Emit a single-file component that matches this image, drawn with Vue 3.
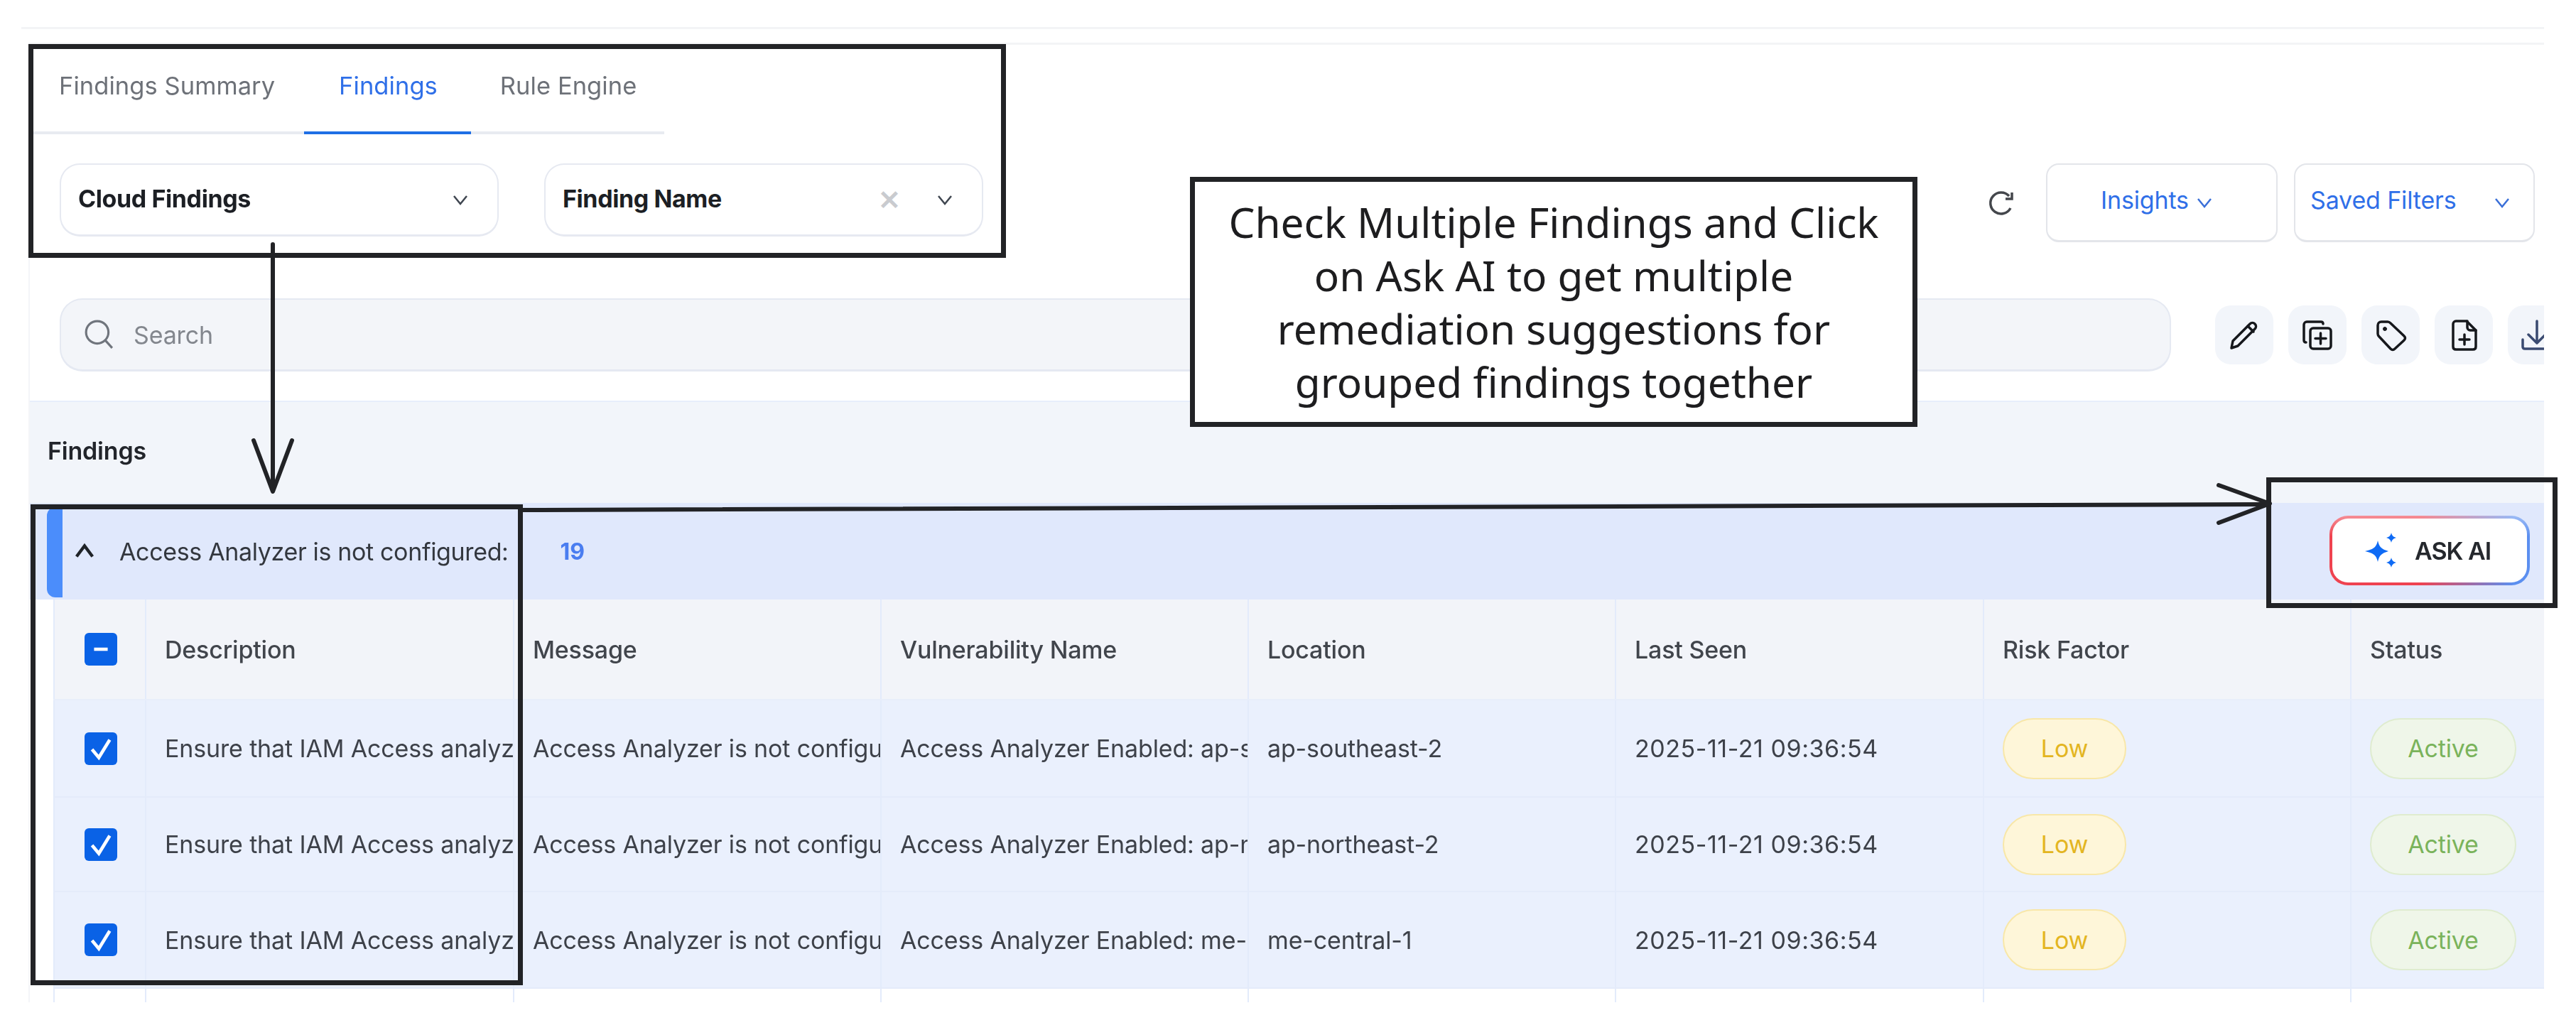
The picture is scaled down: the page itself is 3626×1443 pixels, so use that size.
<script setup>
const tabs = [
  { label: 'Findings Summary', active: false },
  { label: 'Findings', active: true },
  { label: 'Rule Engine', active: false },
]
const columns = ['Description', 'Message', 'Vulnerability Name', 'Location', 'Last Seen', 'Risk Factor', 'Status']
const rows = [
  { vuln: 'Access Analyzer Enabled: ap-southeast-2', location: 'ap-southeast-2', h: 137 },
  { vuln: 'Access Analyzer Enabled: ap-northeast-2', location: 'ap-northeast-2', h: 133 },
  { vuln: 'Access Analyzer Enabled: me-central-1', location: 'me-central-1', h: 136 },
]
const lines = [
  'Check Multiple Findings and Click',
  'on Ask AI to get multiple',
  'remediation suggestions for',
  'grouped findings together',
]
</script>

<template>
  <div class="page">
    <div class="top-line"></div>
    <main class="content">
      <nav class="tabs">
        <div v-for="t in tabs" :key="t.label" class="tab" :class="{ active: t.active }">{{ t.label }}</div>
      </nav>

      <section class="toolbar">
        <div class="selects">
          <div class="select">
            <span class="select-label">Cloud Findings</span>
            <svg class="chev" viewBox="0 0 24 24"><path d="M3 7l9 11 9-11" /></svg>
          </div>
          <div class="select">
            <span class="select-label">Finding Name</span>
            <span class="select-clear">✕</span>
            <svg class="chev" viewBox="0 0 24 24"><path d="M3 7l9 11 9-11" /></svg>
          </div>
        </div>
        <div class="actions">
          <svg class="refresh" viewBox="0 0 36 36"><path d="M31 25A15 15 0 1 1 29 8" /><path d="M33 3v9h-9" /></svg>
          <button class="btn insights"><span>Insights</span>
            <svg class="chev blue" viewBox="0 0 24 24"><path d="M3 7l9 11 9-11" /></svg>
          </button>
          <button class="btn saved"><span>Saved Filters</span>
            <svg class="chev blue" viewBox="0 0 24 24"><path d="M3 7l9 11 9-11" /></svg>
          </button>
        </div>
      </section>

      <section class="search-row">
        <div class="search">
          <svg class="search-icon" viewBox="0 0 40 40"><circle cx="18" cy="17" r="15" /><path d="M29 28l9 10" /></svg>
          <span>Search</span>
        </div>
        <div class="icon-btns">
          <div class="icon-btn">
            <svg viewBox="0 0 48 48"><path d="M6 42l2-10L32 8c2-2 5-2 7 0s2 5 0 7L15 39z" /><path d="M29 11l8 8" /></svg>
          </div>
          <div class="icon-btn">
            <svg viewBox="0 0 48 48"><path d="M8 34c-2 0-3-1-3-3V9c0-2 2-4 4-4h20c2 0 3 1 3 3" /><rect x="14" y="14" width="29" height="29" rx="4" /><path d="M28.500 21v15M21 28.500h15" /></svg>
          </div>
          <div class="icon-btn">
            <svg viewBox="0 0 48 48"><path d="M6 10c0-3 2-5 5-5h9c2 0 3 1 4 2l19 18c2 2 2 4 0 6L30 43c-2 2-4 2-6 0L8 26c-1-1-2-2-2-4z" /><circle cx="16" cy="15" r="2.500" class="fill" /></svg>
          </div>
          <div class="icon-btn">
            <svg viewBox="0 0 48 48"><path d="M13 4h15l13 13v23c0 3-2 4-4 4H13c-2 0-4-1-4-4V8c0-2 2-4 4-4z" /><path d="M29 4v9c0 2 2 4 4 4h8" /><path d="M25 23v14M18 30h14" /></svg>
          </div>
          <div class="icon-btn">
            <svg class="dl" viewBox="0 0 48 48"><path d="M24 4v30M12 23l12 12 12-12" /><path d="M4 30v10c0 2 1 3 3 3h34c2 0 3-1 3-3V30" /></svg>
          </div>
        </div>
      </section>

      <section class="panel">
        <h2 class="panel-title">Findings</h2>
        <div class="group">
          <svg class="group-chev" viewBox="0 0 24 24"><path d="M3 18L12 6l9 12" /></svg>
          <span class="group-name">Access Analyzer is not configured:</span>
          <span class="group-count">19</span>
          <button class="ask">
            <svg viewBox="0 0 46 50">
              <path d="M18 11c2 9 5 12 15 15-10 3-13 6-15 15-2-9-5-12-18-15 13-3 16-6 18-15z" />
              <path d="M37 0c1 4 3 6 7 7-4 1-6 3-7 7-1-4-3-6-7-7 4-1 6-3 7-7zM37 35c1 4 3 6 7 7-4 1-6 3-7 7-1-4-3-6-7-7 4-1 6-3 7-7z" />
            </svg>
            <span>ASK AI</span>
          </button>
        </div>
        <div class="table">
          <div class="row head">
            <div class="cell check"><span class="box"><svg viewBox="0 0 24 24"><path d="M7 12h10" /></svg></span></div>
            <div v-for="c in columns" :key="c" class="cell">{{ c }}</div>
          </div>
          <div v-for="r in rows" :key="r.location" class="row body" :style="{ height: r.h + 'px' }">
            <div class="cell check"><span class="box"><svg viewBox="0 0 24 24"><path d="M5.500 12.500l5 6 8-13" /></svg></span></div>
            <div class="cell">Ensure that IAM Access analyzer is enabled for all regions</div>
            <div class="cell">Access Analyzer is not configured</div>
            <div class="cell">{{ r.vuln }}</div>
            <div class="cell">{{ r.location }}</div>
            <div class="cell date">2025-11-21 09:36:54</div>
            <div class="cell"><span class="pill low">Low</span></div>
            <div class="cell"><span class="pill activep">Active</span></div>
          </div>
          <div class="row tail">
            <div class="cell check"></div>
            <div v-for="c in columns" :key="c" class="cell"></div>
          </div>
        </div>
      </section>
    </main>

    <!-- annotations drawn over the screenshot -->
    <div class="note note-a"></div>
    <div class="note note-b"></div>
    <div class="note note-c"></div>
    <div class="note callout">
      <div v-for="l in lines" :key="l">{{ l }}</div>
    </div>
    <svg class="arrows" viewBox="0 0 3626 1443">
      <path d="M384 344V690" />
      <path d="M357 620l27 72 27-72" />
      <path d="M736 718L3192 710" />
      <path d="M3123 683l72 26-72 27" />
    </svg>
  </div>
</template>

<style>
html, body { margin: 0; background: #fff; }
</style>

<style scoped>
.page {
  position: relative;
  width: 3626px;
  height: 1443px;
  overflow: hidden;
  background: #fff;
  font-family: Inter, "Liberation Sans", sans-serif;
  font-size: 34px;
  letter-spacing: -0.15px;
  color: #3d4149;
  padding-top: 38px;
  box-sizing: border-box;
}
.top-line {
  height: 3px;
  margin: 0 45px 0 30px;
  background: #f3f4f6;
}
.content {
  margin: 19px 45px 0 40px;
  border-top: 3px solid #f3f4f6;
  border-left: 2px solid #f4f5f8;
  overflow: hidden;
  filter: blur(0.7px);
}
.tabs {
  display: flex;
  width: 893px;
  height: 122px;
  border-bottom: 4px solid #e8ebf1;
  box-sizing: content-box;
}
.tab {
  padding: 37px 41px 0;
  color: #6d7178;
  white-space: nowrap;
  font-size: 34.500px;
  letter-spacing: 0.05px;
}
.tab.active {
  padding: 37px 47px 0 49px;
  color: #2f6fe8;
  box-shadow: 0 4px 0 #1f6fe5;
}
.toolbar {
  display: flex;
  justify-content: space-between;
  align-items: flex-start;
  height: 190px;
  padding: 41px 13px 0 42px;
}
.selects { display: flex; gap: 64px; }
.select {
  width: 618px;
  height: 103px;
  box-sizing: border-box;
  display: flex;
  align-items: center;
  padding: 0 34px 0 24px;
  border: 2px solid #e6e9f1;
  border-bottom-width: 3px;
  border-radius: 28px;
  background: #fff;
}
.select-label {
  flex: 1;
  font-weight: 700;
  color: #1c1f24;
  margin-top: -3px;
  letter-spacing: -0.4px;
}
.select-clear {
  color: #c9cbcf;
  font-size: 38px;
  font-weight: 700;
  margin-right: 50px;
}
.chev {
  width: 24px;
  height: 24px;
  fill: none;
  stroke: #3f4650;
  stroke-width: 2.500;
}
.select .chev { margin-right: 6px; }
.chev.blue { stroke: #3a6fd8; }
.actions { display: flex; align-items: center; gap: 23px; }
.refresh {
  width: 36px;
  height: 36px;
  fill: none;
  stroke: #44474c;
  stroke-width: 3.500;
  margin-right: 22px;
}
.btn {
  height: 111px;
  box-sizing: border-box;
  display: flex;
  align-items: center;
  background: #fff;
  border: 2px solid #e3e5ea;
  border-bottom-width: 3px;
  border-radius: 18px;
  color: #2f6fe8;
  font: inherit;
  letter-spacing: inherit;
}
.btn span { margin-top: -8px; }
.insights { width: 326px; padding: 0 0 0 75px; gap: 10px; }
.saved { width: 339px; padding: 0 0 0 21px; gap: 52px; }
.search-row {
  display: flex;
  align-items: center;
  gap: 62px;
  padding-left: 42px;
  height: 103px;
  width: 3700px;
}
.search {
  width: 2972px;
  height: 103px;
  box-sizing: border-box;
  flex: none;
  display: flex;
  align-items: center;
  gap: 28px;
  padding-left: 32px;
  background: #f3f5f9;
  border: 2px solid #e5e9f2;
  border-bottom-width: 3px;
  border-radius: 32px;
  color: #83878e;
}
.search-icon {
  width: 42px;
  height: 42px;
  fill: none;
  stroke: #70757d;
  stroke-width: 3;
}
.icon-btns { display: flex; gap: 21px; }
.icon-btn {
  width: 82px;
  height: 83px;
  flex: none;
  display: flex;
  align-items: center;
  justify-content: center;
  background: #f2f5fa;
  border-radius: 22px;
}
.icon-btn svg {
  width: 48px;
  height: 48px;
  fill: none;
  stroke: #16181c;
  stroke-width: 3.500;
  stroke-linejoin: round;
  stroke-linecap: round;
}
.icon-btn svg .fill { fill: #16181c; stroke-width: 1; }
.icon-btn svg.dl { stroke: #3a4a70; }
.panel {
  margin-top: 41px;
  border-top: 2px solid #e7eefb;
  background: linear-gradient(#f2f5fa 142px, #fff 142px);
}
.panel-title {
  height: 142px;
  margin: 0;
  box-sizing: border-box;
  padding: 48px 0 0 25px;
  font-size: 34px;
  font-weight: 600;
  color: #22252b;
  letter-spacing: -0.2px;
}
.group {
  position: relative;
  height: 136px;
  box-sizing: border-box;
  display: flex;
  align-items: center;
  background: #e0e8fc;
  padding-left: 62px;
}
.group::before {
  content: "";
  position: absolute;
  left: 24px;
  top: 6px;
  width: 22px;
  height: 127px;
  background: #4b8dfb;
  border-radius: 12px 0 0 12px;
}
.group-chev {
  width: 30px;
  height: 30px;
  fill: none;
  stroke: #1f2328;
  stroke-width: 3.500;
  margin-right: 34px;
}
.group-name { color: #33373e; letter-spacing: -0.35px; }
.group-count {
  margin-left: 73px;
  color: #4a7df0;
  font-weight: 700;
  font-size: 32px;
}
.ask {
  position: absolute;
  right: 20px;
  top: 18px;
  width: 282px;
  height: 98px;
  display: flex;
  align-items: center;
  gap: 24px;
  padding: 0 0 0 46px;
  box-sizing: border-box;
  border: 4px solid transparent;
  border-radius: 26px;
  background:
    linear-gradient(#fff, #fff) padding-box,
    linear-gradient(180deg, rgba(255,255,255,.4), rgba(255,255,255,0) 30%) border-box,
    linear-gradient(90deg, #ef4350 45%, #5b8ff0 92%) border-box;
  font: inherit;
  font-size: 34px;
  font-weight: 600;
  letter-spacing: -1px;
  color: #25282d;
}
.ask svg { width: 46px; height: 50px; fill: #0f6bf5; flex: none; }
.table { margin-left: 33px; }
.row {
  display: grid;
  grid-template-columns: 131px 518px 517px 517px 517px 518px 517px 273px;
  box-sizing: border-box;
}
.row.head { height: 142px; background: #f2f4f9; border-bottom: 2px solid #e8eefa; }
.row.body { background: #eaf0fd; border-bottom: 2px solid #e4ebfa; }
.row.tail { height: 19px; }
.cell {
  display: flex;
  align-items: center;
  padding: 0 0 0 26px;
  border-right: 2px solid #e3ebfb;
  overflow: hidden;
  white-space: nowrap;
  min-width: 0;
  box-sizing: border-box;
}
.cell.date { letter-spacing: 0.55px; }
.row.head .cell { color: #41454c; font-weight: 500; letter-spacing: -0.2px; }
.cell:first-child { border-left: 2px solid #e3ebfb; }
.cell:last-child { border-right: none; }
.cell.check { padding: 0 0 0 42px; }
.box {
  width: 46px;
  height: 46px;
  display: flex;
  border-radius: 6px;
  background: #0a62e6;
}
.box svg {
  width: 46px;
  height: 46px;
  fill: none;
  stroke: #fff;
  stroke-width: 2.400;
}
.pill {
  height: 86px;
  box-sizing: border-box;
  display: flex;
  align-items: center;
  justify-content: center;
  border-radius: 43px;
  border: 2px solid;
}
.low { width: 174px; background: #fef6d9; border-color: #f8e7a8; color: #e3b521; }
.activep { width: 206px; background: #eff6e9; border-color: #dfeccf; color: #7ab35b; }
.note {
  position: absolute;
  box-sizing: border-box;
  border: 7px solid #222326;
}
.note-a { left: 40px; top: 62px; width: 1376px; height: 301px; }
.note-b { left: 43px; top: 710px; width: 693px; height: 677px; }
.note-c { left: 3190px; top: 672px; width: 410px; height: 184px; }
.callout {
  left: 1675px;
  top: 249px;
  width: 1024px;
  height: 352px;
  background: #fff;
  display: flex;
  flex-direction: column;
  align-items: center;
  justify-content: center;
  font-family: "Noto Sans", sans-serif;
  font-weight: 400;
  font-size: 58.500px;
  line-height: 75px;
  letter-spacing: 0;
  color: #1d1d1f;
}
.arrows {
  position: absolute;
  inset: 0;
  width: 3626px;
  height: 1443px;
  fill: none;
  stroke: #222326;
  stroke-width: 6;
  stroke-linecap: round;
  stroke-linejoin: round;
  pointer-events: none;
}
</style>
